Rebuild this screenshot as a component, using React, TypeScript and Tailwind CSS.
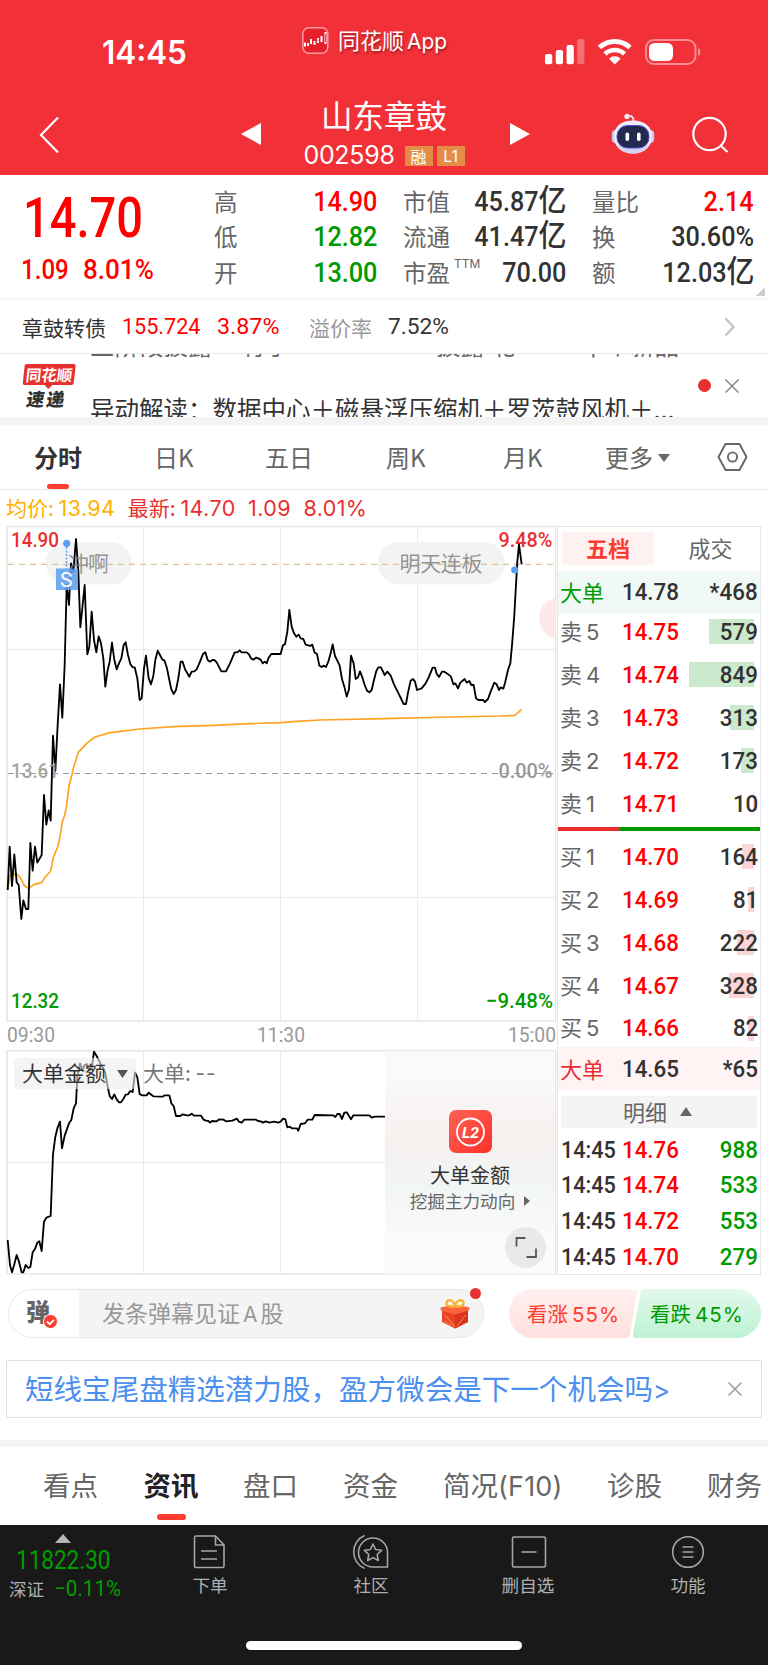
import type { ReactNode } from "react";

const PRICE_LINE =
    "23,1395 29,1265 36,1383 43,1288 50,1372 56,1380 64,1482 70,1426 78,1452 85,1452 91,1254 98,1337 105,1265 112,1313 125,1290 132,1110 139,1199 146,1156 152,1187 159,932 166,1038 173,900 180,778 187,878 194,720 200,480 207,540 213,415 220,440 228,342 235,440 241,607 254,480 262,688 268,665 275,560 282,645 289,682 296,634 303,655 310,700 316,785 323,735 329,710 336,653 343,705 350,733 357,715 364,700 371,660 377,652 384,690 391,717 398,727 404,727 412,760 419,825 425,820 432,730 438,692 446,760 453,778 460,753 466,705 473,677 480,690 487,704 493,706 501,730 508,765 514,793 521,807 528,795 535,760 542,710 548,710 555,733 562,745 568,755 575,740 583,739 590,733 600,710 609,687 616,682 623,705 630,710 637,705 643,705 650,712 664,739 678,739 690,715 704,682 712,682 719,676 725,682 740,682 747,688 753,700 760,704 768,698 775,700 782,704 788,715 794,710 800,715 806,698 814,687 842,687 849,660 855,658 862,620 868,555 875,605 882,625 889,635 896,629 902,640 910,642 917,659 930,663 937,659 944,683 951,687 958,722 965,726 972,722 978,726 985,710 992,685 998,658 1005,693 1012,707 1019,722 1026,762 1033,785 1040,815 1047,793 1053,692 1061,715 1067,762 1074,757 1080,739 1087,757 1094,780 1101,797 1108,802 1115,795 1122,765 1129,738 1135,727 1143,727 1154,750 1162,740 1172,752 1182,778 1197,808 1211,837 1218,837 1224,803 1232,767 1239,762 1245,770 1251,795 1265,790 1277,775 1287,755 1298,728 1305,728 1310,746 1317,756 1326,740 1333,740 1342,746 1353,755 1360,778 1366,775 1374,790 1381,773 1394,762 1400,773 1408,768 1414,780 1421,780 1428,820 1435,825 1449,825 1455,831 1464,822 1472,800 1483,773 1490,778 1497,795 1502,787 1510,791 1516,770 1524,735 1531,715 1537,650 1543,570 1548,480 1552,410 1557,358 1565,418";

const AVERAGE_LINE =
    "23,1395 30,1351 43,1348 55,1351 63,1362 72,1380 83,1389 93,1385 103,1378 125,1373 133,1360 152,1338 160,1298 174,1263 180,1235 187,1190 194,1170 200,1143 207,1082 214,1057 220,1030 235,982 260,955 285,936 330,923 420,912 520,905 640,901 750,896 842,893 880,890 960,885 1152,881 1352,876 1502,873 1544,871 1554,863 1565,853";

const ORDER_LINE =
    "23,600 30,675 36,697 43,673 50,645 57,665 65,697 70,697 77,675 85,684 91,681 98,637 105,627 112,608 118,604 125,633 132,545 139,533 152,528 159,343 166,290 173,262 180,245 186,325 194,287 207,250 214,240 221,205 228,190 232,110 240,70 247,90 254,75 261,72 268,90 275,85 282,35 290,48 300,68 310,85 316,100 323,140 329,168 336,177 343,163 350,178 357,187 363,187 370,177 377,164 384,163 391,153 398,156 405,97 412,112 419,162 426,166 440,166 446,158 460,169 488,170 494,166 508,166 514,190 521,198 528,228 541,228 548,223 560,226 568,226 575,221 582,227 603,227 611,239 618,242 625,243 630,248 636,243 650,244 658,238 671,239 678,244 697,242 711,236 717,245 725,248 733,239 768,239 774,243 782,244 789,248 797,244 808,248 822,245 835,248 842,245 849,236 856,238 862,262 869,260 876,265 890,265 895,272 902,252 915,250 923,239 937,239 944,225 1000,226 1006,231 1012,222 1019,222 1026,237 1033,218 1040,217 1053,238 1060,226 1108,226 1115,233 1125,230 1155,230";

interface Level {
    label: string
    price: string
    qty: string
    bar: number
}

const SELLS: Level[] = [
    { label: "卖 5", price: "14.75", qty: "579", bar: 45 },
    { label: "卖 4", price: "14.74", qty: "849", bar: 65 },
    { label: "卖 3", price: "14.73", qty: "313", bar: 24 },
    { label: "卖 2", price: "14.72", qty: "173", bar: 13 },
    { label: "卖 1", price: "14.71", qty: "10", bar: 1 },
];

const BUYS: Level[] = [
    { label: "买 1", price: "14.70", qty: "164", bar: 12 },
    { label: "买 2", price: "14.69", qty: "81", bar: 6 },
    { label: "买 3", price: "14.68", qty: "222", bar: 17 },
    { label: "买 4", price: "14.67", qty: "328", bar: 25 },
    { label: "买 5", price: "14.66", qty: "82", bar: 6 },
];

const DEALS = [
    { time: "14:45", price: "14.76", qty: "988" },
    { time: "14:45", price: "14.74", qty: "533" },
    { time: "14:45", price: "14.72", qty: "553" },
    { time: "14:45", price: "14.70", qty: "279" },
];

// Narrow figures, squeezed towards the left or right edge
function Num({ children, className = "", right = false }: { children: ReactNode, className?: string, right?: boolean }) {
    return (
        <span className={`inline-block whitespace-nowrap font-[Roboto,'Noto_Sans_CJK_SC',sans-serif] ${right ? "origin-right" : "origin-left"} ${className}`}>
            {children}
        </span>
    )
}

function StatusBar() {
    return (
        <div className="flex h-[91px] text-white">
            <div className="w-[302px] pl-[102px] pt-[34px] text-[32px] leading-[38px] font-semibold font-[Inter,sans-serif]">
                <span className="inline-block origin-left scale-x-[0.98]">14:45</span>
            </div>
            <div className="flex w-[243px] pt-[27px]">
                <svg width="27" height="28" viewBox="0 0 27 28" fill="none">
                    <rect x="0.8" y="0.8" width="25" height="25.5" rx="6" fill="#e5202b" stroke="#f99ba0" strokeWidth="1.5" />
                    <path d="M3 15.5v4M6 16v3M9 12v5M12.5 14v4M16 11v5M19.5 9v6M23.5 5v12" stroke="#fff" strokeWidth="2" />
                    <path d="M6 16.5h.1M16 12.5v1.5M23.5 7v8" stroke="#e5202b" strokeWidth="0.8" />
                </svg>
                <span className="ml-[9px] -mt-0.5 text-[22px] leading-7 whitespace-nowrap [text-shadow:1px_2px_2px_rgba(0,0,0,.35)]">
                    同花顺 <span className="-ml-[2px] inline-block origin-left scale-x-95 font-[Inter]">App</span>
                </span>
            </div>
            <svg className="mt-[38px]" width="156" height="28" viewBox="545 38 156 28" fill="none">
                <g fill="#fff">
                    <rect x="545" y="54" width="7.2" height="10.3" rx="2" />
                    <rect x="555.8" y="50" width="7.2" height="14.3" rx="2" />
                    <rect x="566.6" y="45" width="7.2" height="19.3" rx="2" />
                    <rect x="577.2" y="39" width="7.2" height="25.3" rx="2" opacity="0.3" />
                </g>
                <path d="M599.5 47.5a22.3 22.3 0 0 1 30.5 0" stroke="#fff" strokeWidth="5" />
                <path d="M605 54a14 14 0 0 1 19.5 0" stroke="#fff" strokeWidth="4.6" />
                <path d="M609 58.7a8.3 8.3 0 0 1 11.6 0L614.8 64.5Z" fill="#fff" />
                <rect x="646" y="40" width="49.5" height="24" rx="8" stroke="#fff" strokeOpacity="0.45" strokeWidth="2" />
                <rect x="649" y="43" width="24" height="18" rx="5.5" fill="#fff" />
                <path d="M698 48v8q2.5-1 2.5-4t-2.5-4Z" fill="#fff" opacity="0.45" />
            </svg>
        </div>
    )
}

function Robot() {
    return (
        <svg width="44" height="42" viewBox="0 0 44 42" fill="none">
            <path d="M16 3.2q7-1.5 6.5 5" stroke="#e9e9f5" strokeWidth="1.8" />
            <circle cx="16" cy="3.4" r="2.6" fill="#ecebf6" />
            <rect x="0.8" y="17" width="8" height="13" rx="4" fill="#c9cbee" />
            <rect x="35.2" y="17" width="8" height="13" rx="4" fill="#c9cbee" />
            <path d="M22 7.5C34 7.5 41 14 41 23.5s-7 17-19 17-19-7-19-17 7-16 19-16Z" fill="#eceef9" />
            <path d="M6 32c4 6 9 8.5 16 8.5s12-2.5 16-8.5Z" fill="#d3d4ee" />
            <rect x="6" y="12.5" width="32" height="22.5" rx="10.5" fill="#222a4e" stroke="#5a49d6" strokeWidth="1" />
            <rect x="14.5" y="19.5" width="3.6" height="8.5" rx="1.8" fill="#fff" />
            <rect x="26" y="19.5" width="3.6" height="8.5" rx="1.8" fill="#fff" />
        </svg>
    )
}

function Header() {
    return (
        <header className="h-[175px] bg-[#f23037]">
            <StatusBar />
            <div className="flex h-[84px] text-white">
                <svg className="ml-[39px] mt-[25px]" width="21" height="38" viewBox="0 0 21 38" fill="none">
                    <path d="M19 1.5 2 19l17 17.5" stroke="#fff" strokeWidth="2.2" />
                </svg>
                <svg className="ml-[181px] mt-[32px]" width="20" height="22" viewBox="0 0 20 22"><path d="M20 0v22L0 11Z" fill="#fff" /></svg>
                <div className="flex w-[249px] flex-col items-center pr-[3px]">
                    <h1 className="mt-[5px] text-[31.5px] leading-9">山东章鼓</h1>
                    <div className="mt-[11px] flex h-6 items-center">
                        <span className="text-[25px] leading-6 font-[Inter] -tracking-[0.3px]">002598</span>
                        <span className="ml-2.5 mt-px h-5 w-[28px] bg-[#e38d47] text-center text-[16px] leading-5">融</span>
                        <span className="ml-1 mt-px h-5 w-[28px] bg-[#e38d47] text-center text-[16px] leading-5 font-[Inter]">L1</span>
                    </div>
                </div>
                <svg className="mt-[32px]" width="20" height="22" viewBox="0 0 20 22"><path d="M0 0v22L20 11Z" fill="#fff" /></svg>
                <div className="ml-[81px] mt-[22px]"><Robot /></div>
                <svg className="ml-[37px] mt-[25px]" width="38" height="38" viewBox="0 0 38 38" fill="none">
                    <circle cx="17.5" cy="18" r="16.2" stroke="#fff" strokeWidth="2.2" />
                    <path d="m28.5 29.5 7 6.500" stroke="#fff" strokeWidth="2.2" />
                </svg>
            </div>
        </header>
    )
}

function QuoteRow({ label, sup, value, unit, tone, width }: { label: string, sup?: string, value: string, unit?: string, tone: string, width: string }) {
    return (
        <div className={`flex h-[35.5px] items-center justify-between ${width}`}>
            <span className="-mt-0.5 flex text-[23.5px] leading-8 whitespace-nowrap text-[#666]">
                {label}
                {sup && <sup className="ml-1 top-0 text-[12px] leading-4 font-[Inter]">{sup}</sup>}
            </span>
            <Num right className={`text-[28px] leading-8 font-medium scale-x-[0.9] ${tone}`}>
                {value}{unit && <span className="text-[31px] leading-6">{unit}</span>}
            </Num>
        </div>
    )
}

function Quote() {
    return (
        <section className="relative flex h-[125px] border-b-2 border-[#f5f5f5] pt-[9px]">
            <div className="w-[214px] pl-[21px]">
                <Num className="mt-[6px] ml-[2px] h-[56px] text-[56px] leading-[56px] font-medium text-[#ff0000] scale-x-[0.84]">14.70</Num>
                <div className="mt-[8px] flex text-[#ff0000]">
                    <Num className="w-[62px] text-[28px] leading-8 font-medium scale-x-[0.86]">1.09</Num>
                    <Num className="text-[28px] leading-8 font-medium scale-x-[0.93]">8.01%</Num>
                </div>
            </div>
            <div>
                <QuoteRow width="w-[163px]" label="高" value="14.90" tone="text-[#ff0000]" />
                <QuoteRow width="w-[163px]" label="低" value="12.82" tone="text-[#009900]" />
                <QuoteRow width="w-[163px]" label="开" value="13.00" tone="text-[#009900]" />
            </div>
            <div className="ml-[26px]">
                <QuoteRow width="w-[163px]" label="市值" value="45.87" unit="亿" tone="text-[#323232]" />
                <QuoteRow width="w-[163px]" label="流通" value="41.47" unit="亿" tone="text-[#323232]" />
                <QuoteRow width="w-[163px]" label="市盈" sup="TTM" value="70.00" tone="text-[#323232]" />
            </div>
            <div className="ml-[26px]">
                <QuoteRow width="w-[162px]" label="量比" value="2.14" tone="text-[#ff0000]" />
                <QuoteRow width="w-[162px]" label="换" value="30.60%" tone="text-[#323232]" />
                <QuoteRow width="w-[162px]" label="额" value="12.03" unit="亿" tone="text-[#323232]" />
            </div>
            <svg className="absolute right-[3px] bottom-[2px]" width="9" height="9"><path d="M9 0v9H0Z" fill="#ccc" /></svg>
        </section>
    )
}

function Bond() {
    return (
        <section className="flex h-[54px] items-center border-b border-[#e8e8e8] pl-[22px] text-[21px] leading-7 whitespace-nowrap text-[#333]">
            <span className="w-[100px]">章鼓转债</span>
            <Num className="w-[95px] text-[22px] text-[#ff0000] scale-x-[0.98]">155.724</Num>
            <Num className="w-[92px] text-[22px] text-[#ff0000] scale-x-[1.06]">3.87%</Num>
            <span className="w-[79px] text-[#999]">溢价率</span>
            <Num className="w-[336px] text-[22px] scale-x-[1.03]">7.52%</Num>
            <svg width="11" height="20" viewBox="0 0 11 20" fill="none"><path d="m1.5 1.5 8 8.500-8 8.500" stroke="#c4c4c4" strokeWidth="2.4" /></svg>
        </section>
    )
}

function News() {
    return (
        <section className="flex h-[63px] overflow-hidden">
            <div className="ml-[22px] mt-[10px] w-[51px] -skew-x-6 text-center">
                <div className="h-[21px] rounded-[2px] bg-[#e93030] text-[15.5px] leading-[21px] font-bold whitespace-nowrap text-white">同花顺</div>
                <svg className="mx-auto" width="8" height="4"><path d="M0 0h8L4 4Z" fill="#e93030" /></svg>
                <div className="text-[18px] leading-[18px] font-black tracking-[2px] whitespace-nowrap text-[#333] -skew-x-3">速递</div>
            </div>
            <div className="ml-[17px] w-[608px] text-[24.5px] whitespace-nowrap text-[#333]">
                <div className="-mt-[22px] flex h-[64px] leading-[26px] text-[#666]">
                    <span className="w-[151px]">三阶段披露</span>
                    <span className="w-[195px]">有小</span>
                    <span className="w-[145px]">披露 北</span>
                    <span>十个新品</span>
                </div>
                <div className="leading-[26px]">异动解读：数据中心＋磁悬浮压缩机＋罗茨鼓风机＋<span className="font-[Inter]">...</span></div>
            </div>
            <div className="mt-[25px] size-[13px] rounded-full bg-[#e93030]" />
            <svg className="ml-[14px] mt-[25px]" width="14" height="14" viewBox="0 0 14 14"><path d="m.5.5 13 13M13.5.5l-13 13" stroke="#888" strokeWidth="1.5" /></svg>
        </section>
    )
}

function PeriodTabs() {
    return (
        <nav className="flex h-[73px] border-t-8 border-b border-t-[#f4f4f4] border-b-[#e8e8e8] text-[24px] leading-[64px] whitespace-nowrap text-[#666]">
            <div className="flex w-[121px] flex-col items-center pr-[5px] text-[#323232]">
                <span className="h-[59px] font-bold">分时</span>
                <span className="h-[5px] w-[22px] rounded-full bg-[#fd3d32]" />
            </div>
            <span className="w-[110px] pl-[33px]">日K</span>
            <span className="w-[110px] pl-[34px]">五日</span>
            <span className="w-[110px] pl-[45px]">周K</span>
            <span className="w-[110px] pl-[52px]">月K</span>
            <span className="w-[156px] pl-[44px]">
                更多<svg className="ml-[5px] mb-1 inline" width="12" height="8"><path d="M0 0h12L6 8Z" fill="#666" /></svg>
            </span>
            <svg className="mt-[16px]" width="32" height="32" viewBox="0 0 32 32" fill="none" stroke="#666" strokeWidth="1.9">
                <path d="M8.5 3h14l7 13-7 13h-14l-7-13Z" strokeLinejoin="round" />
                <circle cx="15.5" cy="16" r="4.6" />
            </svg>
        </nav>
    )
}

function PriceChart() {
    return (
        <svg className="block" width="557" height="524" viewBox="0 526 557 524" fill="none" fontFamily="Roboto, sans-serif" fontSize="21" fontWeight="500">
            <path d="M143.5 526v495M280.5 526v495M417.5 526v495M7 649.5h548.5M7 897.5h548.5" stroke="#ebebeb" />
            <path d="M7.2 1021V526.5H555.5V1021Z" stroke="#e6e6e6" strokeWidth="1.5" />
            <rect x="46" y="542" width="86" height="42.5" rx="21.2" fill="#f3f3f3" />
            <rect x="378" y="542" width="127" height="42.5" rx="21.2" fill="#f3f3f3" />
            <path d="M555.5 597.5A21 21 0 0 0 555.5 638.5Z" fill="#ffe8e8" />
            <path d="M8 564.3H555" stroke="#d9c19c" strokeWidth="1.2" strokeDasharray="6 5" />
            <path d="M8 773.5H555" stroke="#999" strokeWidth="1.2" strokeDasharray="6 5" />
            <g transform="translate(0 425) scale(0.33333)" strokeLinejoin="round">
                <polyline points={AVERAGE_LINE} stroke="#ffa21f" strokeWidth="5" />
                <polyline points={PRICE_LINE} stroke="#000" strokeWidth="5.5" />
            </g>
            <g fontFamily="'Noto Sans CJK SC', sans-serif" fontWeight="400" fill="#888" fillOpacity="0.9">
                <text x="68" y="571" textLength="41">冲啊</text>
                <text x="399.500" y="571" textLength="83">明天连板</text>
            </g>
            <path d="M66.5 547v22" stroke="#5c9df0" strokeWidth="1.5" strokeDasharray="2 1.5" />
            <circle cx="66.7" cy="543.3" r="3.6" fill="#5c9df0" />
            <rect x="56" y="568.5" width="22" height="21.5" fill="#5c9df0" fillOpacity="0.85" />
            <text x="60" y="587" fill="#fff" fontSize="21" fontWeight="400">S</text>
            <circle cx="514.7" cy="570" r="3.6" fill="#5c9df0" />
            <text x="11" y="546.5" fill="#e93030" textLength="48" lengthAdjust="spacingAndGlyphs">14.90</text>
            <text x="498.500" y="546.5" fill="#e93030" textLength="54" lengthAdjust="spacingAndGlyphs">9.48%</text>
            <text x="11" y="777.5" fill="#999" fillOpacity="0.9" textLength="48" lengthAdjust="spacingAndGlyphs">13.61</text>
            <text x="498.500" y="777.5" fill="#999" textLength="54" lengthAdjust="spacingAndGlyphs">0.00%</text>
            <text x="11" y="1008" fill="#009900" textLength="48" lengthAdjust="spacingAndGlyphs">12.32</text>
            <text x="486" y="1008" fill="#009900" textLength="67" lengthAdjust="spacingAndGlyphs">−9.48%</text>
            <g fill="#999" fontWeight="400">
                <text x="7" y="1042" textLength="48" lengthAdjust="spacingAndGlyphs">09:30</text>
                <text x="257" y="1042" textLength="48" lengthAdjust="spacingAndGlyphs">11:30</text>
                <text x="508" y="1042" textLength="48" lengthAdjust="spacingAndGlyphs">15:00</text>
            </g>
        </svg>
    )
}

function OrderChart() {
    return (
        <div className="relative h-[225px]">
            <svg className="block" width="557" height="225" viewBox="0 1050 557 225" fill="none">
                <path d="M143.5 1050v224M280.5 1050v224M7 1162.5h548.5" stroke="#e8e8e8" />
                <path d="M7.2 1274V1050.7H555.5V1274Z" stroke="#e6e6e6" strokeWidth="1.5" />
                <polyline transform="translate(0 1040) scale(0.33333)" points={ORDER_LINE} stroke="#000" strokeWidth="5.5" strokeLinejoin="round" />
            </svg>
            <div className="absolute top-[8px] left-[14px] flex items-start">
                <div className="flex h-[31px] w-[122px] rounded-[3px] bg-[#ececec]/60 pl-[8px] text-[21px] leading-[29px] text-[#323232]">
                    大单金额
                    <svg className="mt-[12px] ml-[11px]" width="11" height="8"><path d="M0 0h11L5.5 8Z" fill="#555" /></svg>
                </div>
                <span className="ml-[7px] text-[21px] leading-[29px] whitespace-nowrap text-[#777]">大单: <span className="font-[Inter] tracking-[0.8px]">--</span></span>
            </div>
            <div className="absolute top-px left-[385px] flex h-[223px] w-[170px] flex-col items-center bg-[linear-gradient(180deg,#fafafa_10%,#f7f0ef_38%,#f1f5f3_60%,#fafbfb_85%)]">
                <svg className="mt-[59px]" width="43" height="43" viewBox="0 0 43 43" fill="none">
                    <defs>
                        <linearGradient id="l2" x1="0" y1="0" x2="1" y2="1">
                            <stop stopColor="#ff6257" /><stop offset="1" stopColor="#fb3127" />
                        </linearGradient>
                    </defs>
                    <rect width="43" height="43" rx="7" fill="url(#l2)" />
                    <circle cx="21.5" cy="22" r="13.5" stroke="#fff" strokeWidth="1.8" />
                    <text x="13" y="27.5" fontSize="15" fontWeight="700" fontStyle="italic" fontFamily="Roboto" fill="#fff" textLength="17" lengthAdjust="spacingAndGlyphs">L2</text>
                </svg>
                <div className="mt-[8px] text-[20px] leading-7 text-[#323232]">大单金额</div>
                <div className="flex items-center text-[17.6px] leading-6 whitespace-nowrap text-[#666]">
                    挖掘主力动向
                    <svg className="ml-[9px]" width="6" height="10"><path d="M0 0v10L6 5Z" fill="#666" /></svg>
                </div>
                <div className="absolute right-[9px] bottom-[6px] size-[41px] rounded-full bg-[#e9e9e9]">
                    <svg width="41" height="41" viewBox="0 0 41 41" fill="none"><path d="M11.5 19.5v-8.500h9M31 21.5v8.500h-9.500" stroke="#555" strokeWidth="1.8" /></svg>
                </div>
            </div>
        </div>
    )
}

function LevelRow({ level, barClass }: { level: Level, barClass: string }) {
    return (
        <div className="relative flex h-[42.9px] items-center text-[24px] leading-8">
            <div className={`absolute right-[6.5px] h-[25px] ${barClass}`} style={{ width: level.bar }} />
            <span className="relative -mt-[2px] w-[64px] pl-[2px] text-[22px] text-[#666]">
                {level.label.slice(0, 1)}<span className="ml-[4px] font-[Inter]">{level.label.slice(2)}</span>
            </span>
            <Num className="relative font-medium text-[#ff0000] scale-x-[0.93]">{level.price}</Num>
            <Num right className="relative mr-[2px] ml-auto font-medium text-[#323232] scale-x-[0.93]">{level.qty}</Num>
        </div>
    )
}

function BigOrderRow({ price, qty, className }: { price: string, qty: string, className: string }) {
    return (
        <div className={`flex h-[42.5px] items-center text-[24px] leading-8 ${className}`}>
            <span className="-mt-[2px] w-[64px] pl-[2px] text-[22px]">大单</span>
            <Num className="font-medium text-[#323232] scale-x-[0.93]">{price}</Num>
            <Num right className="mr-[2px] ml-auto font-medium text-[#323232] scale-x-[0.93]">{qty}</Num>
        </div>
    )
}

function OrderBook() {
    return (
        <aside className="mt-[36px] h-[749px] w-[204px] border border-[#e6e6e6]">
            <div className="flex h-[44px] pt-[5px] text-center text-[22px] leading-[31px]">
                <span className="ml-[4px] h-[33px] w-[92px] rounded-[3px] bg-[#fff1f0] font-bold text-[#fd3d32]">五档</span>
                <span className="ml-[20px] w-[73px] text-[#666]">成交</span>
            </div>
            <BigOrderRow price="14.78" qty="*468" className="bg-[#f1f9f6] text-[#009900]" />
            <div className="-mt-[3px]">
                {SELLS.map((level) => <LevelRow key={level.label} level={level} barClass="bg-[#cbe9cc]" />)}
            </div>
            <div className="mt-[2px] flex h-[4px]">
                <div className="w-[62px] bg-[#e93030]" />
                <div className="flex-1 bg-[#009900]" />
            </div>
            <div className="mt-[4.5px]">
                {BUYS.map((level) => <LevelRow key={level.label} level={level} barClass="bg-[#fbd5d5]" />)}
            </div>
            <BigOrderRow price="14.65" qty="*65" className="-mt-[2.5px] bg-[#fff3f4] text-[#e93030]" />
            <div className="mx-[3px] mt-[6px] mb-[4px] flex h-[32px] justify-center bg-[#f4f4f4] pr-[3px] text-[22px] leading-[30px] text-[#666]">
                明细
                <svg className="mt-[11px] ml-[13px]" width="12" height="9"><path d="M6 0l6 9H0Z" fill="#666" /></svg>
            </div>
            {DEALS.map((deal) => (
                <div key={deal.price} className="flex h-[35.7px] items-center text-[24px] leading-8 font-medium">
                    <Num className="w-[61px] ml-[3px] text-[#323232] scale-x-[0.9]">{deal.time}</Num>
                    <Num className="text-[#ff0000] scale-x-[0.93]">{deal.price}</Num>
                    <Num right className="mr-[2px] ml-auto text-[#009900] scale-x-[0.93]">{deal.qty}</Num>
                </div>
            ))}
        </aside>
    )
}

function Market() {
    return (
        <section className="flex h-[785px]">
            <div className="w-[557px]">
                <div className="flex h-[36px] items-center gap-[12.5px] pl-[6px] text-[21px] whitespace-nowrap text-[#e93030]">
                    <span className="text-[#ffb000]">均价: <span className="font-[Inter] text-[21.5px] tracking-[0.4px]">13.94</span></span>
                    <span>最新: <span className="font-[Inter] text-[21.5px] tracking-[0.4px]">14.70</span></span>
                    <span className="font-[Inter] text-[21.5px] tracking-[0.4px]">1.09</span>
                    <span className="font-[Inter] text-[21.5px] tracking-[0.4px]">8.01%</span>
                </div>
                <PriceChart />
                <OrderChart />
            </div>
            <OrderBook />
        </section>
    )
}

function Gift() {
    return (
        <svg width="30" height="31" viewBox="0 0 30 31" fill="none">
            <path d="M2 10v14l13 6.5L28 24V10Z" fill="#ea4425" />
            <path d="M15 15v15.5L28 24V10Z" fill="#d9351c" />
            <path d="M.5 9.5 15 6.500l14.500 3L29 12.500l-14 4-14-4Z" fill="#f9643a" />
            <path d="m5 17 10 12M4 23l8 5M26 17 17 28" stroke="#ff8a5a" strokeWidth="1" />
            <path d="M15 8C9 9.500 6 7.500 6.500 4.500 7 1 13.500 1 15 8c1.500-7 8-7 8.500-3.500C24 7.500 21 9.500 15 8Z" stroke="#f5b638" strokeWidth="2.400" />
        </svg>
    )
}

function Barrage() {
    return (
        <section className="flex h-[85px] pt-[14px] pl-[8px]">
            <div className="relative flex h-[49px] w-[476px] items-center overflow-visible rounded-full border border-[#e8e8e8] bg-[#f4f4f4]">
                <div className="relative h-[47px] w-[70px] rounded-l-full bg-white pl-[17px] text-[24px] leading-[42px] font-black text-[#666]">
                    弹
                    <svg className="absolute top-[24px] left-[34px]" width="15" height="15" viewBox="0 0 15 15" fill="none">
                        <circle cx="7.5" cy="7.5" r="7" fill="#fd3d32" stroke="#fff" /><path d="m4 7.500 2.700 2.700 4.300-4.300" stroke="#fff" strokeWidth="1.8" />
                    </svg>
                </div>
                <span className="ml-[23px] w-[338px] text-[23px] whitespace-nowrap text-[#999]">发条弹幕见证<span className="mx-[3px] font-[Inter] text-[21px]">A</span>股</span>
                <Gift />
                <span className="absolute -top-[2px] right-[2px] size-[11px] rounded-full bg-[#e93030]" />
            </div>
            <div className="relative ml-[25px] flex h-[49px] w-[252px] text-[20.5px] leading-[49px] whitespace-nowrap">
                <svg className="absolute" width="252" height="49" viewBox="0 0 252 49">
                    <defs>
                        <linearGradient id="up" x1="0" y1="0" x2="0" y2="1"><stop stopColor="#fff0ef" /><stop offset="1" stopColor="#ffe0dd" /></linearGradient>
                        <linearGradient id="down" x1="0" y1="0" x2="0" y2="1"><stop stopColor="#e2f9ec" /><stop offset="1" stopColor="#bdf2d3" /></linearGradient>
                    </defs>
                    <path d="M24.5 0H125q3.5 0 3 3L121 45.5q-.8 3.5-4 3.5H24.5a24.5 24.5 0 0 1 0-49Z" fill="url(#up)" />
                    <path d="M136 0h91.5a24.5 24.5 0 0 1 0 49H127q-3.5 0-3-3.5L131.5 3.5Q132 0 136 0Z" fill="url(#down)" />
                </svg>
                <span className="relative ml-[18px] w-[123px] text-[#fd3d32]">看涨<span className="ml-[4px] font-[Inter] tracking-[1px]">55%</span></span>
                <span className="relative text-[#009900]">看跌<span className="ml-[4px] font-[Inter] tracking-[1px]">45%</span></span>
            </div>
        </section>
    )
}

function Ad() {
    return (
        <section className="h-[80px]">
            <div className="mx-[6px] flex h-[58px] items-center border-[1.5px] border-[#e3e3e3] pl-[18px]">
                <span className="w-[703px] text-[28.55px] leading-[54px] whitespace-nowrap text-[#4a90f0]">
                    短线宝尾盘精选潜力股，盈方微会是下一个机会吗<span className="font-[Inter] text-[26px]">&gt;</span>
                </span>
                <svg width="14" height="14" viewBox="0 0 14 14"><path d="m.5.5 13 13M13.5.5l-13 13" stroke="#999" strokeWidth="1.5" /></svg>
            </div>
        </section>
    )
}

function InfoTabs() {
    return (
        <nav className="flex h-[85px] overflow-hidden border-t-[7px] border-[#f4f4f4] pl-[43px] text-[27.5px] leading-[75px] whitespace-nowrap text-[#666]">
            <span className="w-[100px] shrink-0">看点</span>
            <span className="flex w-[56px] shrink-0 flex-col items-center font-bold text-[#222]">
                <span className="h-[67px]">资讯</span>
                <span className="h-[6px] w-[29px] rounded-full bg-[#fd3d32]" />
            </span>
            <span className="ml-[44px] w-[100px] shrink-0">盘口</span>
            <span className="w-[100px] shrink-0">资金</span>
            <span className="w-[164px] shrink-0">简况<span className="font-[Inter] text-[27px] tracking-[0.2px]">(F10)</span></span>
            <span className="w-[100px] shrink-0">诊股</span>
            <span className="shrink-0">财务</span>
        </nav>
    )
}

function NavItem({ label, children, className }: { label: string, children: ReactNode, className: string }) {
    return (
        <div className={`flex w-[80px] flex-col items-center ${className}`}>
            <svg className="mt-[8px]" width="38" height="38" viewBox="0 0 38 38" fill="none" stroke="#a5a5a5" strokeWidth="1.6">{children}</svg>
            <span className="text-[17.6px] leading-7 whitespace-nowrap">{label}</span>
        </div>
    )
}

function BottomBar() {
    return (
        <footer className="h-[140px] bg-[#191919] text-[#b0b0b0]">
            <div className="flex h-[116px]">
                <div className="w-[124px] pt-[9px]">
                    <svg className="ml-[55px] block" width="16" height="9"><path d="M8 0l8 9H0Z" fill="#b5b5b5" /></svg>
                    <div className="mt-[3px] h-[28px] pl-[16px]"><Num className="text-[25px] leading-[30px] text-[#009f00] scale-x-[0.9]">11822.30</Num></div>
                    <div className="mt-[1px] flex pl-[9px] text-[17.5px] leading-7 whitespace-nowrap">
                        <span className="w-[48px]">深证</span>
                        <Num className="mt-[2px] text-[21.5px] leading-6 text-[#009f00] scale-x-[0.96]">−0.11%</Num>
                    </div>
                </div>
                <NavItem label="下单" className="ml-[46px]">
                    <path d="M4.5 3h20L33 12v21q0 1.5-1.5 1.5h-27Q3.5 34.5 3.5 33V4.5Q3.5 3 5 3ZM24.5 3v9H33M10 18h16M10 26h16" />
                </NavItem>
                <NavItem label="社区" className="ml-[81px]">
                    <path d="M12.500 2.500a18 18 0 0 0 0 33M21 5A14.500 14.500 0 1 0 21 34H35.500V19.500A14.500 14.500 0 0 0 21 5Z" />
                    <path d="m21 11 2.600 5.500 6 .8-4.400 4.200 1.100 6-5.300-2.900-5.300 2.900 1.100-6-4.400-4.200 6-.8Z" strokeLinejoin="round" />
                </NavItem>
                <NavItem label="删自选" className="ml-[77px]">
                    <rect x="3.500" y="4" width="33" height="30" rx="1.5" /><path d="M12.500 19h15" />
                </NavItem>
                <NavItem label="功能" className="ml-[80px]">
                    <circle cx="19" cy="19" r="15.3" /><path d="M13.5 14h11M13.5 19h11M13.5 24h11" />
                </NavItem>
            </div>
            <div className="mx-auto h-[9px] w-[276px] rounded-full bg-white" />
        </footer>
    )
}

export default function App() {
    return (
        <div className="h-[1665px] w-[768px] overflow-hidden bg-white font-['Noto_Sans_CJK_SC',sans-serif] leading-tight">
            <Header />
            <Quote />
            <Bond />
            <News />
            <PeriodTabs />
            <Market />
            <Barrage />
            <Ad />
            <InfoTabs />
            <BottomBar />
        </div>
    )
}
